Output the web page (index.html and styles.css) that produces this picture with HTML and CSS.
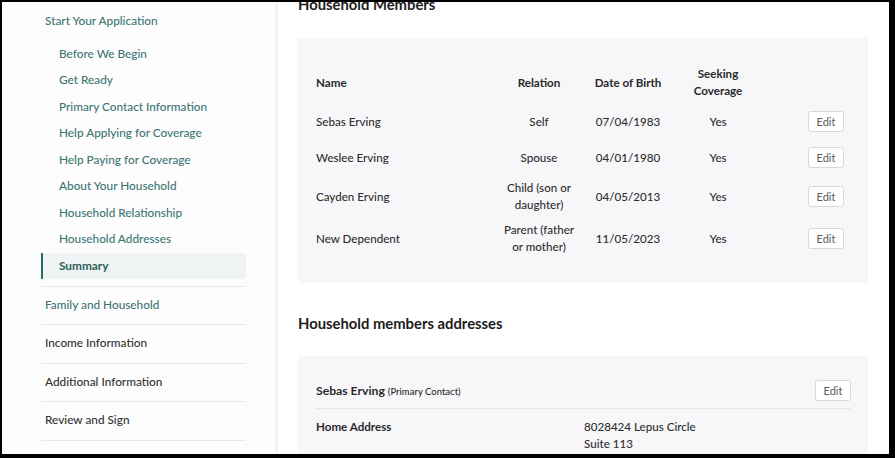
FILE: index.html
```html
<!DOCTYPE html>
<html lang="en">
<head>
<meta charset="utf-8">
<title>Summary</title>
<link rel="stylesheet" href="styles.css">
</head>
<body>
<div class="frame">
  <aside class="sidebar">
    <nav class="nav">
      <div class="group-title">Start Your Application</div>
      <ul class="sub-list">
        <li class="sub-item">Before We Begin</li>
        <li class="sub-item">Get Ready</li>
        <li class="sub-item">Primary Contact Information</li>
        <li class="sub-item">Help Applying for Coverage</li>
        <li class="sub-item">Help Paying for Coverage</li>
        <li class="sub-item">About Your Household</li>
        <li class="sub-item">Household Relationship</li>
        <li class="sub-item">Household Addresses</li>
        <li class="sub-item active">Summary</li>
      </ul>
      <div class="section teal">Family and Household</div>
      <div class="section">Income Information</div>
      <div class="section">Additional Information</div>
      <div class="section">Review and Sign</div>
    </nav>
  </aside>
  <div class="divider-strip"></div>
  <main class="main">
    <h2 class="heading heading-top">Household Members</h2>
    <section class="card members">
      <div class="trow thead">
        <div class="c-name">Name</div>
        <div class="c-center">Relation</div>
        <div class="c-center">Date of Birth</div>
        <div class="c-center">Seeking Coverage</div>
        <div></div>
      </div>
      <div class="trow">
        <div class="c-name">Sebas Erving</div>
        <div class="c-center">Self</div>
        <div class="c-center">07/04/1983</div>
        <div class="c-center">Yes</div>
        <div class="c-edit"><button class="edit-btn">Edit</button></div>
      </div>
      <div class="trow">
        <div class="c-name">Weslee Erving</div>
        <div class="c-center">Spouse</div>
        <div class="c-center">04/01/1980</div>
        <div class="c-center">Yes</div>
        <div class="c-edit"><button class="edit-btn">Edit</button></div>
      </div>
      <div class="trow">
        <div class="c-name">Cayden Erving</div>
        <div class="c-center">Child (son or daughter)</div>
        <div class="c-center">04/05/2013</div>
        <div class="c-center">Yes</div>
        <div class="c-edit"><button class="edit-btn">Edit</button></div>
      </div>
      <div class="trow">
        <div class="c-name">New Dependent</div>
        <div class="c-center">Parent (father or mother)</div>
        <div class="c-center">11/05/2023</div>
        <div class="c-center">Yes</div>
        <div class="c-edit"><button class="edit-btn">Edit</button></div>
      </div>
    </section>

    <h2 class="heading heading-addr">Household members addresses</h2>
    <section class="card addresses">
      <div class="addr-head">
        <div class="addr-name">Sebas Erving <span class="addr-note">(Primary Contact)</span></div>
        <button class="edit-btn">Edit</button>
      </div>
      <div class="addr-row">
        <div class="addr-label">Home Address</div>
        <div class="addr-value">8028424 Lepus Circle<br>Suite 113</div>
      </div>
    </section>
  </main>
</div>
</body>
</html>
```

FILE: styles.css
```css
* { box-sizing: border-box; }

html, body {
  margin: 0;
  padding: 0;
  background: #000;
}

body {
  width: 895px;
  height: 458px;
  overflow: hidden;
  padding: 2px 6px 4px 2px;
  font-family: "Lato", "Liberation Sans", sans-serif;
  color: #2b2b2b;
}

.frame {
  display: flex;
  height: 100%;
  background: #fff;
  overflow: hidden;
}

/* Sidebar */
.sidebar {
  width: 273px;
  flex: none;
  background: #fdfdfe;
}

.divider-strip {
  width: 3px;
  flex: none;
  background: #f3f3f6;
}

.nav {
  margin-left: 39px;
  width: 205px;
  padding-top: 8px;
}

.group-title {
  padding-left: 4px;
  height: 22px;
  line-height: 22px;
  font-size: 11.8px;
  font-weight: 500;
  color: #3c7672;
}

.sub-list {
  list-style: none;
  margin: 0;
  padding: 8.5px 0 7px;
  border-bottom: 1px solid #e7e8ea;
}

.sub-item {
  height: 26.5px;
  line-height: 26px;
  padding-left: 18px;
  font-size: 11.8px;
  font-weight: 500;
  color: #3c7672;
}

.sub-item.active {
  height: 26px;
  line-height: 26px;
  background: #eef4f3;
  border-left: 2px solid #2e6864;
  border-radius: 0 4px 4px 0;
  padding-left: 16px;
  font-weight: 700;
  color: #2c5e5a;
}

.section {
  height: 38.5px;
  line-height: 36px;
  padding: 0 0 2px 4px;
  border-bottom: 1px solid #e7e8ea;
  font-size: 11.8px;
  font-weight: 500;
  color: #333;
}

.section.teal { color: #3c7672; }

/* Main */
.main {
  flex: 1;
  padding: 0 20px 0 20px;
  min-width: 0;
}

.heading {
  margin: 0;
  font-size: 14.8px;
  font-weight: 700;
  line-height: 20px;
  color: #1d1d1d;
}

.heading-top {
  margin-top: -8px;
  margin-bottom: 24px;
}

.heading-addr {
  margin-top: 30px;
  margin-bottom: 23px;
}

.card {
  width: 570px;
  background: #f7f7fa;
}

.members {
  padding: 23px 24px 24px 18px;
}

.trow {
  display: grid;
  grid-template-columns: 1fr 78px 100px 80px 86px;
  align-items: center;
  min-height: 36px;
  padding: 4px 0;
  font-size: 11.6px;
  font-weight: 500;
  line-height: 17px;
  color: #2e2e2e;
}

.thead {
  font-weight: 700;
  min-height: 42px;
  color: #2a2a2a;
}

.c-center {
  text-align: center;
}

.c-edit {
  display: flex;
  justify-content: flex-end;
}

.edit-btn {
  width: 36px;
  height: 21px;
  padding: 0;
  background: #fff;
  border: 1px solid #d8d9dc;
  border-radius: 3px;
  font-family: inherit;
  font-size: 11px;
  color: #5a5a5a;
}

/* Addresses */
.addresses {
  padding: 24px 17px 20px 18px;
}

.addr-head {
  display: flex;
  justify-content: space-between;
  align-items: center;
  padding-bottom: 7px;
  border-bottom: 1px solid #e4e5e8;
}

.addr-name {
  font-size: 12.2px;
  font-weight: 700;
  color: #2a2a2a;
}

.addr-note {
  font-size: 9.5px;
  font-weight: 500;
}

.addr-row {
  display: grid;
  grid-template-columns: 268px 1fr;
  padding-top: 9px;
  font-size: 11.6px;
  font-weight: 500;
  line-height: 17px;
}

.addr-label {
  font-weight: 700;
  color: #2a2a2a;
}

.addr-value { color: #2e2e2e; }
```
